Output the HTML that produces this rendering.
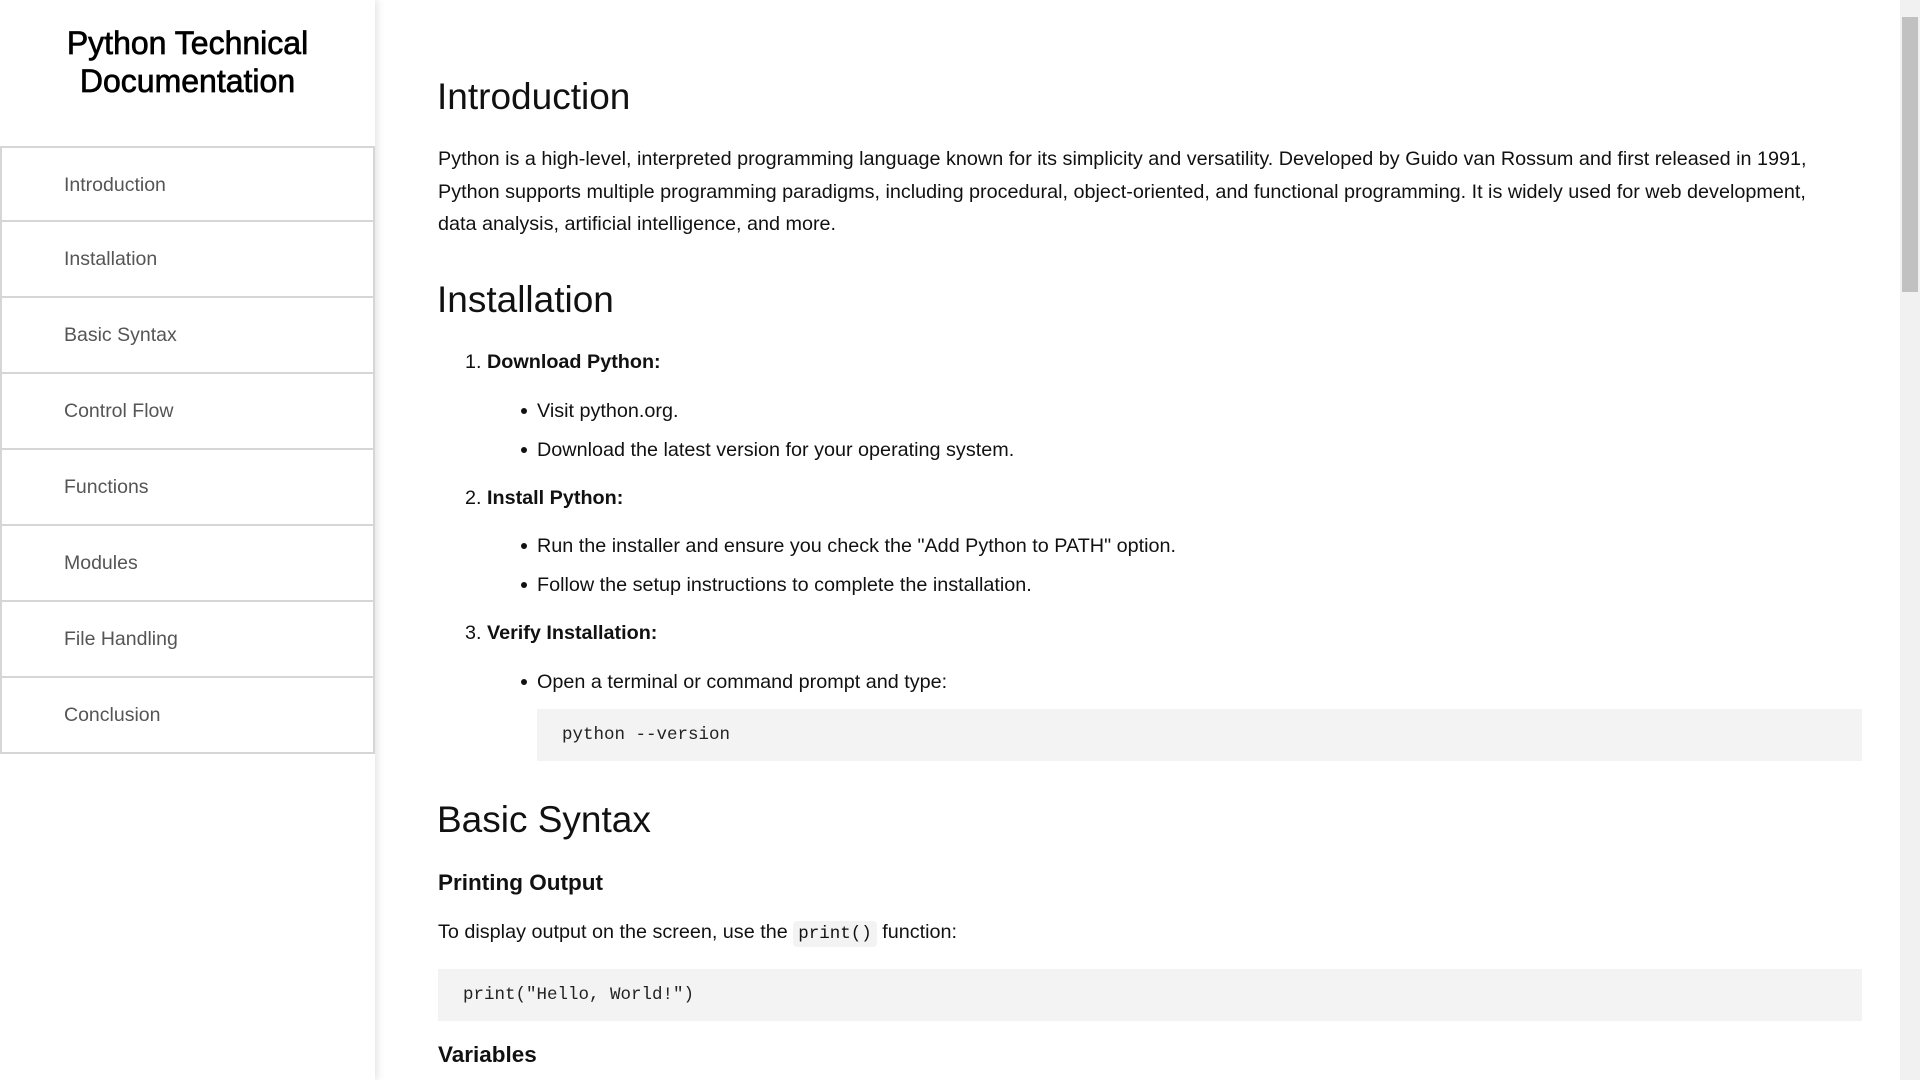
<!DOCTYPE html>
<html><head><meta charset="utf-8"><style>
*{margin:0;padding:0;box-sizing:border-box}
body{width:1920px;height:1080px;overflow:hidden;background:#fff;font-family:"Liberation Sans",Arial,sans-serif;color:#111;position:relative}
.side{position:absolute;left:0;top:0;width:375px;height:1080px;background:#fff;box-shadow:2px 0 8px rgba(0,0,0,.12)}
.side h2{position:absolute;left:0;width:375px;top:24px;text-align:center;font-size:32px;line-height:38px;font-weight:normal;color:#000;-webkit-text-stroke:.7px #000}
.nav{position:absolute;left:0;top:146px;width:375px}
.nav div{height:76px;border:2px solid #d6d6d6;border-top:none;padding-left:62px;line-height:74px;font-size:19.5px;color:#555}
.nav div:first-child{border-top:2px solid #d6d6d6}
.a{position:absolute;white-space:nowrap}
h1{font-weight:normal;font-size:37px;line-height:44px}
.p{font-size:19.8px;line-height:32.5px}
.b{font-weight:bold}
.code{position:absolute;background:#f3f3f3;font-family:"Liberation Mono",monospace;font-size:17.5px;color:#222}
.ic{font-family:"Liberation Mono",monospace;font-size:17.5px;background:#f3f3f3;padding:3px 5px;border-radius:4px}
.dot{position:absolute;width:6px;height:6px;border-radius:3px;background:#111}
.sb{position:absolute;right:0;top:0;width:20px;height:1080px;background:#f1f1f1}
.th{position:absolute;right:2px;top:17px;width:16px;height:275px;background:#c1c1c1}
</style></head><body>
<div class="side"><h2>Python Technical<br>Documentation</h2>
<div class="nav"><div>Introduction</div><div>Installation</div><div>Basic Syntax</div><div>Control Flow</div><div>Functions</div><div>Modules</div><div>File Handling</div><div>Conclusion</div></div></div>

<h1 class="a" style="left:437px;top:75px">Introduction</h1>
<div class="a p" style="left:438px;top:143px">Python is a high-level, interpreted programming language known for its simplicity and versatility. Developed by Guido van Rossum and first released in 1991,<br>Python supports multiple programming paradigms, including procedural, object-oriented, and functional programming. It is widely used for web development,<br>data analysis, artificial intelligence, and more.</div>

<h1 class="a" style="left:437px;top:278px">Installation</h1>
<div class="a p" style="left:465px;top:346px">1. <span class="b">Download Python:</span></div>
<div class="dot" style="left:521px;top:408px"></div><div class="a p" style="left:537px;top:395px">Visit python.org.</div>
<div class="dot" style="left:521px;top:447px"></div><div class="a p" style="left:537px;top:434px">Download the latest version for your operating system.</div>
<div class="a p" style="left:465px;top:482px">2. <span class="b">Install Python:</span></div>
<div class="dot" style="left:521px;top:543px"></div><div class="a p" style="left:537px;top:530px">Run the installer and ensure you check the "Add Python to PATH" option.</div>
<div class="dot" style="left:521px;top:582px"></div><div class="a p" style="left:537px;top:569px">Follow the setup instructions to complete the installation.</div>
<div class="a p" style="left:465px;top:617px">3. <span class="b">Verify Installation:</span></div>
<div class="dot" style="left:521px;top:679px"></div><div class="a p" style="left:537px;top:666px">Open a terminal or command prompt and type:</div>
<div class="code" style="left:537px;top:709px;width:1325px;height:52px;padding-left:25px;line-height:52px">python --version</div>

<h1 class="a" style="left:437px;top:798px">Basic Syntax</h1>
<div class="a b" style="left:438px;top:869px;font-size:22.5px;line-height:28px">Printing Output</div>
<div class="a p" style="left:438px;top:916px">To display output on the screen, use the <span class="ic">print()</span> function:</div>
<div class="code" style="left:438px;top:969px;width:1424px;height:52px;padding-left:25px;line-height:52px">print("Hello, World!")</div>
<div class="a b" style="left:438px;top:1041px;font-size:22.5px;line-height:28px">Variables</div>

<div class="sb"><div class="th"></div></div>
</body></html>
